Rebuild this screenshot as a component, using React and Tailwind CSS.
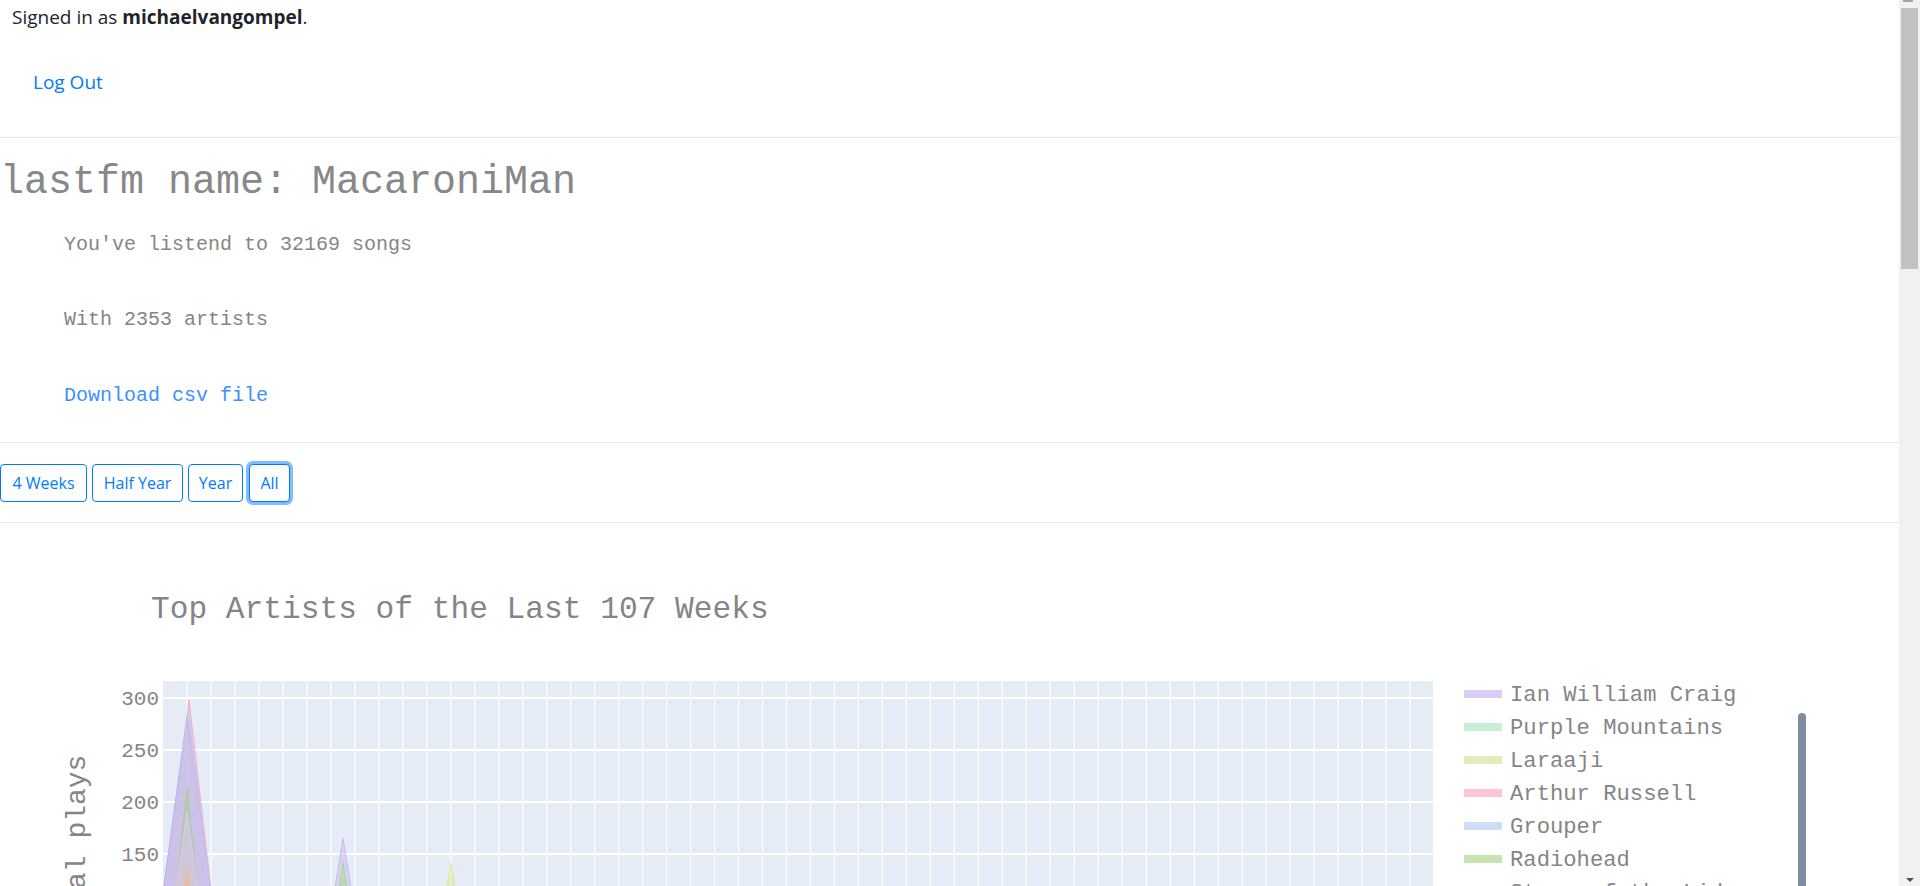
import React from 'react';

const MONO = { fontFamily: '"Liberation Mono", "Courier New", monospace' };

const LEGEND = [
  { name: 'Ian William Craig', color: '#d9cdf3' },
  { name: 'Purple Mountains', color: '#c8efd6' },
  { name: 'Laraaji', color: '#e5ecbb' },
  { name: 'Arthur Russell', color: '#fcc5d8' },
  { name: 'Grouper', color: '#cfdcf7' },
  { name: 'Radiohead', color: '#c7e3b2' },
  { name: 'Stars of the Lid', color: '#f9d3b5' },
];

// spikes: peak x, peak value, half-width at zero
const SPIKES = [
  { x: 187, v: 282, w: 40, color: '#b9a6ec' },
  { x: 189, v: 298, w: 36, color: '#f9a9c6' },
  { x: 188, v: 288, w: 38, color: '#b4c9f3' },
  { x: 187, v: 212, w: 24, color: '#9fd48a' },
  { x: 187, v: 190, w: 28, color: '#e6c4f7' },
  { x: 187, v: 136, w: 20, color: '#f7b98c' },
  { x: 343, v: 165, w: 28, color: '#c9b8ee' },
  { x: 343, v: 142, w: 22, color: '#a8d98e' },
  { x: 451, v: 141, w: 26, color: '#dbe79a' },
];

const ZERO = 487;
const yOf = (v) => ZERO - v * 1.04;

const TICKS = [300, 250, 200, 150, 100, 50];
const VLINES = Array.from({ length: 52 }, (_, i) => 187 + i * 23.98);

function Chart() {
  return (
    <svg width="1899" height="364" className="block" style={MONO}>
      <text x="151" y="95" fontSize="31.2" fill="#858585">
        Top Artists of the Last 107 Weeks
      </text>

      <rect x="163" y="158" width="1270" height="329" fill="#e5ecf6" />
      {VLINES.map((x) => (
        <line key={x} x1={x} x2={x} y1="158" y2="487" stroke="#ffffff" strokeWidth="1.2" />
      ))}
      {TICKS.map((t) => (
        <line key={t} x1="163" x2="1433" y1={yOf(t)} y2={yOf(t)} stroke="#ffffff" strokeWidth="2" />
      ))}

      {SPIKES.map((s, i) => (
        <polygon
          key={i}
          points={`${s.x - s.w},${ZERO} ${s.x},${yOf(s.v)} ${s.x + s.w},${ZERO}`}
          fill={s.color}
          fillOpacity="0.5"
          stroke={s.color}
          strokeWidth="1"
        />
      ))}

      {TICKS.map((t) => (
        <text key={t} x="159" y={yOf(t) + 7} fontSize="21" fill="#858585" textAnchor="end">
          {t}
        </text>
      ))}

      <text
        x="85"
        y="324"
        fontSize="28"
        fill="#858585"
        textAnchor="middle"
        transform="rotate(-90 85 324)"
      >
        Total plays
      </text>

      {LEGEND.map((l, i) => (
        <g key={l.name}>
          <rect x="1464" y={167 + i * 33} width="38" height="8" fill={l.color} />
          <text x="1510" y={178 + i * 33} fontSize="22.2" fill="#858585">
            {l.name}
          </text>
        </g>
      ))}
      <rect x="1798" y="190" width="8" height="200" rx="4" fill="#808aa3" />
    </svg>
  );
}

function Hr() {
  return <div className="h-px bg-[#e5e5e5]" />;
}

const BTN =
  'h-[38px] rounded-[4px] border border-[#007bff] bg-white text-[16px] leading-[24px] text-[#007bff] flex items-center justify-center';

export default function App() {
  return (
    <div className="flex h-[886px] w-full overflow-hidden bg-white" style={{ fontFamily: '"Open Sans", "Noto Sans", sans-serif' }}>
      <main className="min-w-0 flex-1 overflow-hidden">
        <div className="h-[34px] pl-[12px] text-[19px] leading-[34px] text-[#212529]">
          Signed in as <b className="font-bold">michaelvangompel</b>.
        </div>
        <div className="mt-[36px] pl-[33px] text-[19px] leading-[24px] text-[#007bff]">Log Out</div>
        <div className="mt-[43px]">
          <Hr />
        </div>

        <div style={MONO} className="text-[#858585]">
          <h1 className="mt-[21px] pl-0 text-[40px] leading-[48px] font-normal text-[#888888]">lastfm name: MacaroniMan</h1>
          <p className="mt-[26px] pl-[64px] text-[20px] leading-[24px]">You've listend to 32169 songs</p>
          <p className="mt-[51px] pl-[64px] text-[20px] leading-[24px]">With 2353 artists</p>
          <p className="mt-[52px] pl-[64px] text-[20px] leading-[24px] text-[#3d8fff]">Download csv file</p>
        </div>

        <div className="mt-[34px]">
          <Hr />
        </div>
        <div className="mt-[21px] flex gap-[5px]">
          <button className={`${BTN} w-[87px]`}>4 Weeks</button>
          <button className={`${BTN} w-[91px]`}>Half Year</button>
          <button className={`${BTN} w-[55px]`}>Year</button>
          <button className={`${BTN} ml-[1px] w-[41px] ring-[3px] ring-[#80bdff]`}>All</button>
        </div>
        <div className="mt-[20px]">
          <Hr />
        </div>

        <Chart />
      </main>

      <div className="relative flex w-[21px] shrink-0 flex-col items-end bg-[#f1f1f1]">
        <div className="mr-[7px] h-[2px] w-[10px] bg-[#a3a3a3]" />
        <div className="mr-[2px] mt-[6px] h-[261px] w-[17px] bg-[#c1c1c1]" />
        <div className="flex-1" />
        <div className="mb-[4px] mr-[6px] h-0 w-0 border-x-[4px] border-t-[4px] border-x-transparent border-t-[#505050]" />
      </div>
    </div>
  );
}
